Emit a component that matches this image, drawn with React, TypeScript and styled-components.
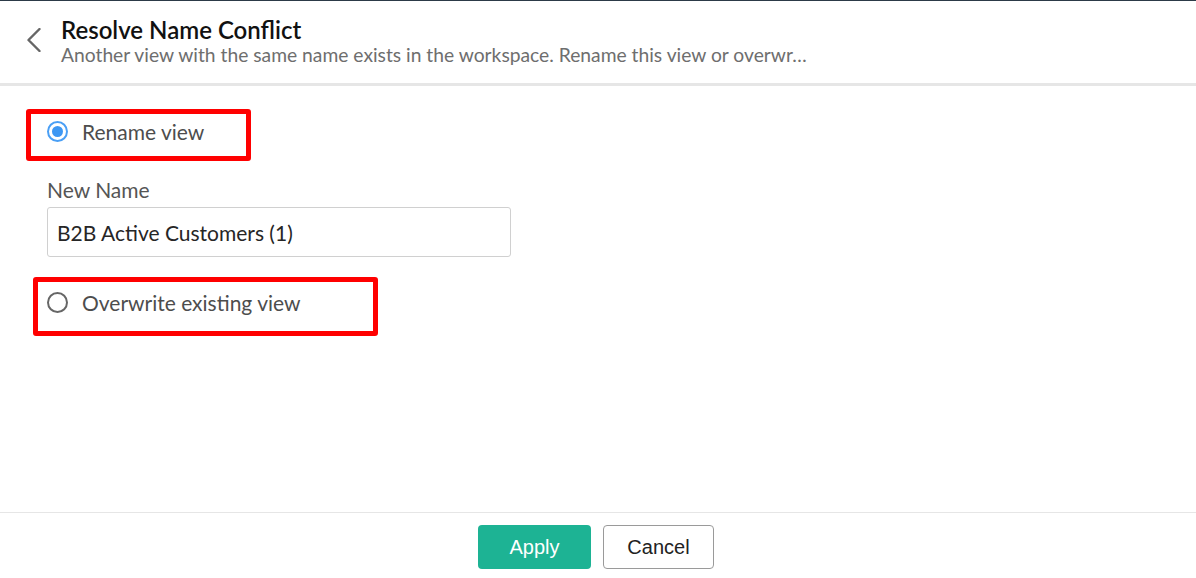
import React, { useState } from 'react';
import styled, { createGlobalStyle } from 'styled-components';

const GlobalStyle = createGlobalStyle`
  html, body {
    margin: 0;
    padding: 0;
    background: #fff;
  }

  body {
    font-family: Lato, 'Noto Sans', sans-serif;
    color: #333;
  }
`;

const Page = styled.div`
  height: 578px;
  display: flex;
  flex-direction: column;
  border-top: 1px solid #2c3a47;
  box-sizing: border-box;
`;

const Header = styled.header`
  display: flex;
  align-items: flex-start;
  gap: 19px;
  height: 85px;
  padding: 15px 0 0 25px;
  box-sizing: border-box;
  border-bottom: 3px solid #e6e6e6;
`;

const BackButton = styled.button`
  display: flex;
  align-items: center;
  justify-content: center;
  width: 17px;
  height: 24px;
  margin-top: 12px;
  padding: 0;
  border: none;
  background: none;
  color: #666;
  cursor: pointer;
`;

const TitleBlock = styled.div`
  display: flex;
  flex-direction: column;
`;

const Title = styled.h1`
  margin: 0;
  font-size: 24px;
  line-height: 27px;
  font-weight: 600;
  color: #111;
`;

const Subtitle = styled.p`
  margin: 0;
  font-size: 19.25px;
  line-height: 24px;
  color: #6e6e6e;
  white-space: nowrap;
`;

const Body = styled.main`
  flex: 1;
  padding: 30px 0 0 47px;
`;

const OptionWrap = styled.div<{ $gap?: number }>`
  position: relative;
  margin-top: ${(p) => p.$gap ?? 0}px;
`;

const Option = styled.label`
  display: flex;
  align-items: center;
  gap: 14px;
  height: 30px;
  font-size: 21px;
  color: #4d4d4d;
  cursor: pointer;
`;

const Radio = styled.span<{ $checked: boolean }>`
  display: flex;
  align-items: center;
  justify-content: center;
  width: 21px;
  height: 21px;
  box-sizing: border-box;
  border-radius: 50%;
  border: 2px solid ${(p) => (p.$checked ? '#4a9ff5' : '#666')};

  &::after {
    content: '';
    width: 11px;
    height: 11px;
    border-radius: 50%;
    background: ${(p) => (p.$checked ? '#3d97f3' : 'transparent')};
  }
`;

// red annotation rectangle drawn over the option
const Highlight = styled.span<{ $x: number; $y: number; $w: number; $h: number }>`
  position: absolute;
  left: ${(p) => p.$x}px;
  top: ${(p) => p.$y}px;
  width: ${(p) => p.$w}px;
  height: ${(p) => p.$h}px;
  box-sizing: border-box;
  border: 5px solid #ff0000;
  border-radius: 3px;
  pointer-events: none;
`;

const Field = styled.div`
  display: flex;
  flex-direction: column;
  margin-top: 32px;
`;

const FieldLabel = styled.label`
  font-size: 21px;
  line-height: 24px;
  color: #555;
  margin-bottom: 5px;
`;

const TextInput = styled.input`
  width: 464px;
  height: 50px;
  box-sizing: border-box;
  padding: 0 9px;
  border: 1px solid #d0d0d0;
  border-radius: 3px;
  font-family: Lato, 'Noto Sans', sans-serif;
  font-size: 21px;
  color: #262626;
  outline: none;
`;

const Footer = styled.footer`
  display: flex;
  justify-content: center;
  gap: 12px;
  height: 66px;
  padding: 12px 4px 0 0;
  box-sizing: border-box;
  border-top: 1px solid #e6e6e6;
`;

const Button = styled.button<{ $primary?: boolean }>`
  height: 44px;
  width: ${(p) => (p.$primary ? 113 : 111)}px;
  border-radius: 4px;
  font-family: 'Liberation Sans', Arial, sans-serif;
  font-size: 20px;
  cursor: pointer;
  border: ${(p) => (p.$primary ? 'none' : '1px solid #9a9a9a')};
  background: ${(p) => (p.$primary ? '#1db394' : '#fff')};
  color: ${(p) => (p.$primary ? '#fff' : '#222')};
`;

export default function App() {
  const [mode, setMode] = useState<'rename' | 'overwrite'>('rename');
  const [name, setName] = useState('B2B Active Customers (1)');

  return (
    <>
      <GlobalStyle />
      <Page>
        <Header>
          <BackButton aria-label="Back">
            <svg width="17" height="24" viewBox="0 0 17 24" fill="none">
              <path
                d="M14.5 1 L3.5 12 L14.5 23"
                stroke="currentColor"
                strokeWidth="2.4"
                strokeLinecap="round"
                strokeLinejoin="round"
              />
            </svg>
          </BackButton>
          <TitleBlock>
            <Title>Resolve Name Conflict</Title>
            <Subtitle>
              Another view with the same name exists in the workspace. Rename this view or overwr…
            </Subtitle>
          </TitleBlock>
        </Header>

        <Body>
          <OptionWrap>
            <Option onClick={() => setMode('rename')}>
              <Radio $checked={mode === 'rename'} />
              Rename view
            </Option>
            <Highlight $x={-21} $y={-7} $w={225} $h={52} />
          </OptionWrap>

          <Field>
            <FieldLabel>New Name</FieldLabel>
            <TextInput value={name} onChange={(e) => setName(e.target.value)} />
          </Field>

          <OptionWrap $gap={30}>
            <Option onClick={() => setMode('overwrite')}>
              <Radio $checked={mode === 'overwrite'} />
              Overwrite existing view
            </Option>
            <Highlight $x={-14} $y={-10} $w={345} $h={59} />
          </OptionWrap>
        </Body>

        <Footer>
          <Button $primary>Apply</Button>
          <Button>Cancel</Button>
        </Footer>
      </Page>
    </>
  );
}
